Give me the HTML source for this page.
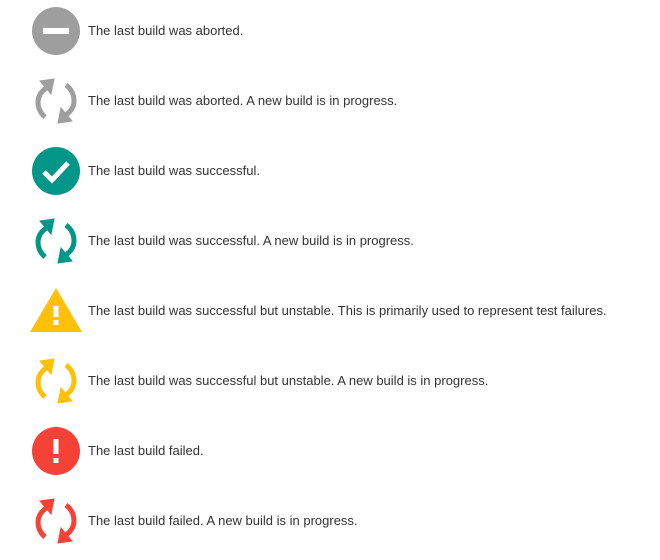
<html><head><style>
body{margin:0;background:#fff;width:660px;height:554px;position:relative;font-family:"Liberation Sans",sans-serif;}
.r{position:absolute;left:0;width:660px;height:70px}
.r svg{position:absolute;left:26px;top:0}
.r span{position:absolute;left:88px;top:0;line-height:62px;font-size:13px;color:#333}
</style></head><body>
<svg width="0" height="0" style="position:absolute"><defs>
<g id="sync">
<path d="M20 18 Q12 24 12 32 Q12 41 19 47" fill="none" stroke-width="5"/>
<polygon points="28,9 14,11 25,24"/>
<path d="M40 15 Q48 21 48 31 Q48 39 40 45" fill="none" stroke-width="5"/>
<polygon points="32,53 46,51 35,38"/>
</g></defs></svg>

<div class="r" style="top:0"><svg width="60" height="62"><circle cx="30" cy="31" r="24" fill="#9e9e9e"/><rect x="17" y="28" width="26" height="6" fill="#fff"/></svg><span>The last build was aborted.</span></div>

<div class="r" style="top:70px"><svg width="60" height="62" fill="#9e9e9e" stroke="#9e9e9e"><use href="#sync"/></svg><span>The last build was aborted. A new build is in progress.</span></div>

<div class="r" style="top:140px"><svg width="60" height="62"><circle cx="30" cy="31" r="24" fill="#009688"/><path d="M18 32 L26 40 L42 23" fill="none" stroke="#fff" stroke-width="5"/></svg><span>The last build was successful.</span></div>

<div class="r" style="top:210px"><svg width="60" height="62" fill="#009688" stroke="#009688"><use href="#sync"/></svg><span>The last build was successful. A new build is in progress.</span></div>

<div class="r" style="top:280px"><svg width="60" height="62"><polygon points="30,8 56,52 4,52" fill="#FFC107"/><rect x="27.5" y="26" width="5" height="11" fill="#fff"/><rect x="27.5" y="40" width="5" height="5" fill="#fff"/></svg><span>The last build was successful but unstable. This is primarily used to represent test failures.</span></div>

<div class="r" style="top:350px"><svg width="60" height="62" fill="#FFC107" stroke="#FFC107"><use href="#sync"/></svg><span>The last build was successful but unstable. A new build is in progress.</span></div>

<div class="r" style="top:420px"><svg width="60" height="62"><circle cx="30" cy="31" r="24" fill="#F44336"/><rect x="27.5" y="19" width="5" height="15" fill="#fff"/><rect x="27.5" y="38" width="5" height="5" fill="#fff"/></svg><span>The last build failed.</span></div>

<div class="r" style="top:490px"><svg width="60" height="62" fill="#F44336" stroke="#F44336"><use href="#sync"/></svg><span>The last build failed. A new build is in progress.</span></div>
</body></html>
